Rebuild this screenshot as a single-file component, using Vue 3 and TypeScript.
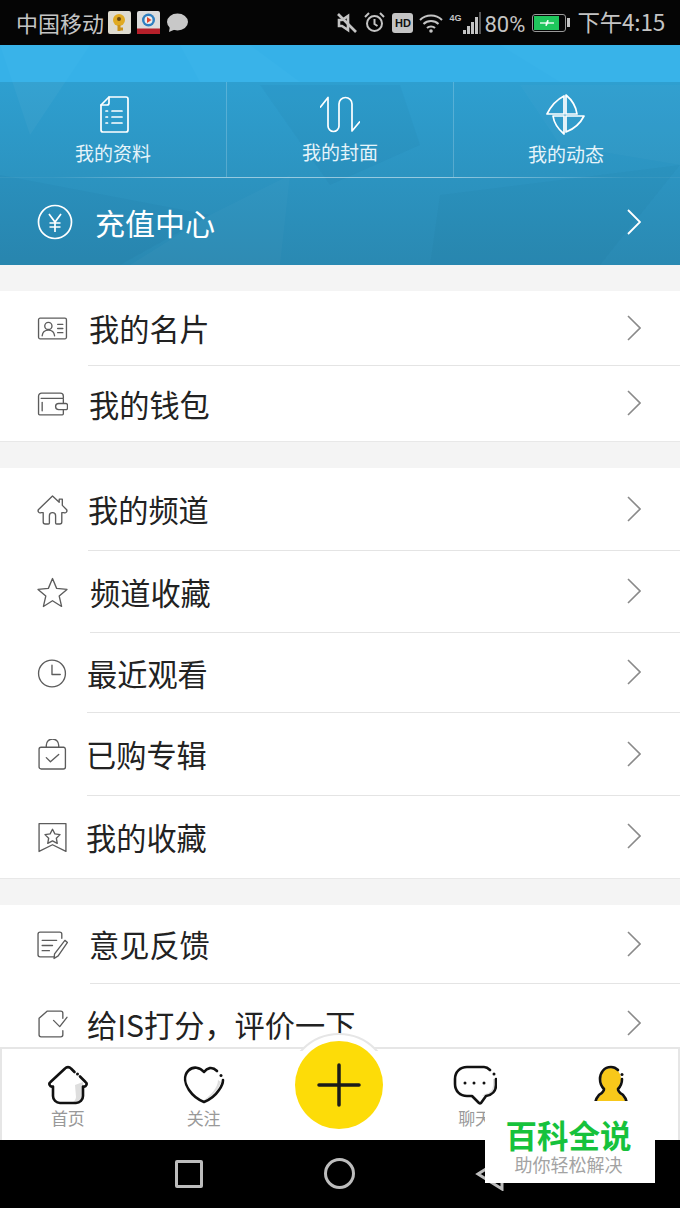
<template>
  <div class="phone">
    <!-- status bar -->
    <div class="status-bar">
      <div class="status-left">
        <span class="carrier">中国移动</span>
        <svg class="app-icon" viewBox="0 0 23 23">
          <rect width="23" height="23" rx="2" fill="#dedbd0" />
          <circle cx="11" cy="9" r="6" fill="#e0aa22" />
          <path d="M11 14v6M11 18h4" stroke="#c9921a" stroke-width="3" fill="none" />
          <circle cx="11" cy="8" r="2" fill="#6a4a12" />
        </svg>
        <svg class="app-icon second" viewBox="0 0 23 23">
          <rect width="23" height="23" rx="2" fill="#dcdcdc" />
          <circle cx="11.500" cy="9" r="6.500" fill="#2f7fc0" />
          <circle cx="11.500" cy="9" r="4" fill="#eee" />
          <path d="M10 6l4.500 3-4.500 3z" fill="#e2452c" />
          <rect y="17.500" width="23" height="5.500" fill="#b5202a" />
        </svg>
        <svg class="bubble" viewBox="0 0 22 20">
          <ellipse cx="11.500" cy="9" rx="10.500" ry="8.500" fill="#c8c8c8" />
          <path d="M4 13l-1 6 7-3z" fill="#c8c8c8" />
        </svg>
      </div>
      <div class="status-right">
        <svg class="st-mute" viewBox="0 0 20 20" fill="none" stroke="#c4c4c4" stroke-width="2.600">
          <path d="M2 7v6h3l6 4V3L5 7z" />
          <path d="M1 1l18 18" />
        </svg>
        <svg class="st-alarm" viewBox="0 0 21 21" fill="none" stroke="#c4c4c4" stroke-width="2">
          <circle cx="10.500" cy="11.500" r="7.500" />
          <path d="M10.500 7v5l3 2M1 5l4-4M20 5l-4-4" />
        </svg>
        <span class="st-hd">HD</span>
        <svg class="st-wifi" viewBox="0 0 24 20" fill="none" stroke="#c4c4c4" stroke-width="2">
          <path d="M1 7c6-6 16-6 22 0M4.500 11c4-4 11-4 15 0M8 15c2-2 6-2 8 0" />
          <circle cx="12" cy="18" r="1.800" fill="#c4c4c4" stroke="none" />
        </svg>
        <span class="st-4g">4G</span>
        <div class="st-signal">
          <i style="height: 4px"></i>
          <i style="height: 8px"></i>
          <i style="height: 12px"></i>
          <i style="height: 17px"></i>
          <i class="dim" style="height: 22px"></i>
        </div>
        <span class="st-pct">80%</span>
        <div class="st-battery">
          <div class="st-battery-fill">
            <svg viewBox="0 0 16 8" width="16" height="8"><path d="M1 4h6l2-3v3h6l-6 0-2 3V4z" fill="#fff" stroke="#fff" stroke-width=".8" /></svg>
          </div>
        </div>
        <span class="st-nub"></span>
        <span class="st-time">下午4:15</span>
      </div>
    </div>

    <main class="main">
      <!-- blue header -->
      <section class="hero">
        <svg class="hero-tex" viewBox="0 0 680 220" preserveAspectRatio="none">
          <polygon points="0,0 90,0 30,90" fill="#fff" opacity=".035" />
          <polygon points="180,0 250,0 300,37 200,37" fill="#fff" opacity=".035" />
          <polygon points="260,40 330,140 420,100 400,40" fill="#0a4d70" opacity=".05" />
          <polygon points="0,130 210,170 120,220 0,220" fill="#0a4d70" opacity=".05" />
          <polygon points="210,170 290,130 280,220 130,220" fill="#fff" opacity=".025" />
          <polygon points="440,150 680,120 600,220 430,220" fill="#0a4d70" opacity=".04" />
          <polygon points="500,0 680,0 680,37 560,37" fill="#fff" opacity=".03" />
          <polygon points="520,40 680,40 680,120 560,100" fill="#fff" opacity=".02" />
        </svg>
        <div class="hero-top"></div>
        <div class="shortcuts">
          <div v-for="s in shortcuts" :key="s.label" class="shortcut">
            <svg class="shortcut-icon" viewBox="0 0 40 42" fill="none" stroke="#fff" stroke-width="1.700" stroke-linejoin="round" stroke-linecap="round">
              <path v-for="d in s.paths" :key="d" :d="d" />
            </svg>
            <span :style="{ transform: `translateY(${s.shift}px)` }">{{ s.label }}</span>
          </div>
        </div>
        <div class="recharge">
          <svg class="yen" viewBox="0 0 36 36" fill="none" stroke="#fff" stroke-width="1.700">
            <circle cx="18" cy="18" r="16.500" />
            <path d="M12 10l6 8 6-8M18 18v10M12.500 19h11M12.500 23h11" />
          </svg>
          <span class="recharge-text">充值中心</span>
          <svg class="chev" viewBox="0 0 14 26" fill="none" stroke="#fff" stroke-width="1.800"><path d="M1 1l12 12L1 25" /></svg>
        </div>
      </section>

      <!-- menu groups -->
      <div v-for="(group, gi) in groups" :key="gi" class="group">
        <div
          v-for="(row, ri) in group"
          :key="row.label"
          class="row"
          :style="{ height: row.h + 'px' }"
        >
          <svg class="row-icon" viewBox="0 0 30 30" fill="none" stroke="#5c5c5c" stroke-width="1.300" stroke-linejoin="round" stroke-linecap="round">
            <path v-for="d in row.paths" :key="d" :d="d" />
          </svg>
          <div
            class="row-body"
            :class="{ lined: ri < group.length - 1 }"
            :style="{ left: row.line + 'px' }"
          >
            <span class="row-label" :style="{ marginLeft: row.x - row.line + 'px' }">{{ row.label }}</span>
          </div>
          <svg class="chev row-chev" viewBox="0 0 14 26" fill="none" stroke="#8a8a8a" stroke-width="1.600"><path d="M1 1l12 12L1 25" /></svg>
        </div>
      </div>
    </main>

    <!-- bottom tabs -->
    <nav class="tabs">
      <div v-for="(t, ti) in tabs" :key="ti" class="tab">
        <svg v-if="t.paths.length" class="tab-icon" viewBox="0 0 44 40">
          <path v-if="t.shade" :d="t.shade" :fill="t.shadeColor" stroke="none" />
          <path v-for="d in t.paths" :key="d" :d="d" fill="none" stroke="#111" stroke-width="2.600" stroke-linecap="round" stroke-linejoin="round" />
          <circle v-for="(c, i) in t.dots" :key="i" :cx="c[0]" :cy="c[1]" r="1.500" fill="#111" />
        </svg>
        <span v-if="t.label" class="tab-label">{{ t.label }}</span>
      </div>
    </nav>
    <div class="plus-halo"></div>
    <div class="plus-btn">
      <svg viewBox="0 0 44 44" width="44" height="44" stroke="#1a1a1a" stroke-width="3.500" stroke-linecap="round">
        <path d="M22 2v40M2 22h40" />
      </svg>
    </div>

    <!-- android nav -->
    <div class="navbar">
      <span class="nav-square"></span>
      <span class="nav-circle"></span>
      <svg class="nav-back" viewBox="0 0 30 34" fill="none" stroke="#bdbdbd" stroke-width="3"><path d="M27 2L3 17l24 15z" /></svg>
    </div>

    <!-- watermark -->
    <div class="watermark">
      <div class="wm-title">百科全说</div>
      <div class="wm-sub">助你轻松解决</div>
    </div>
  </div>
</template>

<script setup lang="ts">
interface Row {
  label: string
  h: number
  x: number
  line: number
  paths: string[]
}

interface Tab {
  label: string
  paths: string[]
  dots: number[][]
  shade?: string
  shadeColor?: string
}

const shortcuts = [
  {
    label: '我的资料',
    shift: 0,
    paths: [
      'M16 3H33a2 2 0 0 1 2 2V36a2 2 0 0 1-2 2H10a2 2 0 0 1-2-2V11z',
      'M16 3v6a2 2 0 0 1-2 2H8',
      'M19 17h10M19 23h10M19 29h10M13 17h1.500M13 23h1.500M13 29h1.500'
    ]
  },
  {
    label: '我的封面',
    shift: -1,
    paths: [
      'M0.500 13L8 3.500V32a5.500 5.500 0 0 0 11 0V10a6.500 6.500 0 0 1 13 0V37L39.500 28'
    ]
  },
  {
    label: '我的动态',
    shift: 1,
    paths: [
      'M1 20C5 12 10 6 18 2V20Z',
      'M20 1C26 6 30 12 31 20H20Z',
      'M38 22C34 30 28 35 20 38V22Z',
      'M18 40C12 35 8 29 7 22H18Z'
    ]
  }
]

const groups: Row[][] = [
  [
    {
      label: '我的名片',
      h: 75,
      x: 89,
      line: 88,
      paths: [
        'M3 5h24a1.500 1.500 0 0 1 1.500 1.500v17a1.500 1.500 0 0 1-1.500 1.500H3a1.500 1.500 0 0 1-1.500-1.500v-17A1.500 1.500 0 0 1 3 5z',
        'M11 9a3.500 3.500 0 1 1 0 7 3.500 3.500 0 0 1 0-7zM5 22c.5-4 3-5.500 6-5.500s5.500 1.500 6 5.500',
        'M20 11h5M20 15h5M20 19h5'
      ]
    },
    {
      label: '我的钱包',
      h: 75,
      x: 89,
      line: 88,
      paths: [
        'M1.500 8a3 3 0 0 1 3-3h18a3 3 0 0 1 3 3v2H4M1.500 8v17a1 1 0 0 0 1 1h22a1 1 0 0 0 1-1v-4',
        'M25.500 11v4M21 15h7a1.500 1.500 0 0 1 1.500 1.500v3a1.500 1.500 0 0 1-1.500 1.500h-7a3 3 0 0 1 0-6z',
        'M5 14v8'
      ]
    }
  ],
  [
    {
      label: '我的频道',
      h: 83,
      x: 88,
      line: 88,
      paths: [
        'M15 2L1.500 15a2 2 0 0 0 2.500 3H6v9a2 2 0 0 0 2 2h3a1 1 0 0 0 1-1v-7a3 3 0 0 1 6 0v7a1 1 0 0 0 1 1h3a2 2 0 0 0 2-2v-9h2a2 2 0 0 0 2.500-3l-4-4V5h-3v3z'
      ]
    },
    {
      label: '频道收藏',
      h: 82,
      x: 90,
      line: 90,
      paths: [
        'M15 1.500l4 9.500 10 1-7.500 6.500 2.300 10L15 23l-8.800 5.500 2.300-10L1 12l10-1z'
      ]
    },
    {
      label: '最近观看',
      h: 80,
      x: 87,
      line: 87,
      paths: [
        'M14.500 2a13 13 0 1 1 0 26 13 13 0 0 1 0-26z',
        'M14.500 7v9h8'
      ]
    },
    {
      label: '已购专辑',
      h: 83,
      x: 86,
      line: 87,
      paths: [
        'M4 8h22a2 2 0 0 1 1.500 2v17a2 2 0 0 1-2 2H4a2 2 0 0 1-2-2V10a2 2 0 0 1 2-2z',
        'M9 8V6a6 6 0 0 1 12 0v2',
        'M9 18l4 4 8-7'
      ]
    },
    {
      label: '我的收藏',
      h: 82,
      x: 86,
      line: 87,
      paths: [
        'M2 1.500h26v27l-13-6.500-13 6.500z',
        'M15 7l2.300 4.500 5 .7-3.600 3.500.9 5-4.600-2.400-4.600 2.400.9-5-3.600-3.500 5-.7z'
      ]
    }
  ],
  [
    {
      label: '意见反馈',
      h: 79,
      x: 89,
      line: 90,
      paths: [
        'M24 9V5a2 2 0 0 0-2-2H3a2 2 0 0 0-2 2v20a2 2 0 0 0 2 2h14',
        'M5 11h14M5 16h10M5 21h7',
        'M27 11l2.500 2-9 13-4 2.500.5-4.500z'
      ]
    },
    {
      label: '给IS打分，评价一下',
      h: 79,
      x: 87,
      line: 88,
      paths: [
        'M25 10V5a2 2 0 0 0-2-2H10L2 10v16a2 2 0 0 0 2 2h19a2 2 0 0 0 2-2v-4',
        'M16 12l6 6 7-9'
      ]
    }
  ]
]

const tabs: Tab[] = [
  {
    label: '首页',
    paths: ['M28.500 7L25 3.500a4 4 0 0 0-6 0L4.500 17a2.500 2.500 0 0 0 2 4.500H7V31a7 7 0 0 0 7 7H30a7 7 0 0 0 7-7V21.500h.5a2.500 2.500 0 0 0 2-4.500L34 11.500'],
    dots: [[31.500, 9]],
    shade: 'M29 20l8-3v14a7 7 0 0 1-7 7h-6a6 6 0 0 0 6-6z',
    shadeColor: '#dedede'
  },
  {
    label: '关注',
    paths: ['M35 6C30 1 25 3 22 7C18 2 11 1 6.500 5.500C1 11 3 19 7 25C11 31 17 35 22 37C27 35 33 31 37 25C40 21 41 18 41 15'],
    dots: [[39, 10.500]],
    shade: 'M36 15c0 8-8 16-14 20 6-1 15-11 17-18z',
    shadeColor: '#dedede'
  },
  { label: '', paths: [], dots: [] },
  {
    label: '聊天',
    paths: ['M37 5C35 3 33 2 31 2H14C7 2 2 7 2 14V19C2 26 7 31 14 31H19L26 38a1.500 1.500 0 0 0 2 0L33 31C39 30 43 26 43 20V14'],
    dots: [[12, 18], [21, 18], [31, 18], [41, 9]],
    shade: 'M40 14v6c0 5-3 8-8 9l-3 2 4-.5c6-1 10-5 10-10.500V14z',
    shadeColor: '#dedede'
  },
  {
    // label sits under the watermark in the screenshot
    label: '',
    paths: ['M29 5C27 3 25 2 22 2C15 2 11 8 11 14C11 18 13 22 15 24C15 27 13 28 10 30C8 32 7 34 6 38H38C37 34 36 32 34 30C31 28 29 27 29 24C31 22 33 18 33 14'],
    dots: [[33, 9.500]],
    shade: 'M22 3C16 3 12 8 12 14C12 18 14 22 16 24C16 27 14 28 11 31C9 33 8 35 7 38H37C36 35 35 33 33 31C30 28 28 27 28 24C30 22 32 18 32 14C32 8 28 3 22 3Z',
    shadeColor: '#f8c81a'
  }
]
</script>

<style scoped>
.phone {
  position: relative;
  width: 680px;
  height: 1208px;
  display: flex;
  flex-direction: column;
  overflow: hidden;
  background: #fff;
  font-family: "Noto Sans CJK SC", "Noto Sans", sans-serif;
}

.status-bar {
  height: 45px;
  flex: none;
  background: #050505;
  color: #c4c4c4;
  display: flex;
  align-items: center;
  justify-content: space-between;
  padding: 0 15px 0 16px;
}

.status-left,
.status-right {
  display: flex;
  align-items: center;
}

.carrier {
  font-size: 22px;
  width: 92px;
  margin-top: -2px;
}

.app-icon {
  width: 23px;
  height: 23px;
}

.app-icon.second {
  margin-left: 6px;
}

.bubble {
  width: 22px;
  height: 20px;
  margin-left: 6px;
}

.st-mute {
  width: 20px;
  height: 20px;
}

.st-alarm {
  width: 21px;
  height: 21px;
  margin-left: 7px;
}

.st-hd {
  width: 21px;
  height: 20px;
  margin-left: 7px;
  background: #c4c4c4;
  color: #111;
  border-radius: 3px;
  font: 700 11px/20px "Liberation Sans", sans-serif;
  text-align: center;
}

.st-wifi {
  width: 24px;
  height: 20px;
  margin-left: 6px;
}

.st-4g {
  width: 12px;
  margin: -10px 0 0 6px;
  font: 700 9px/10px "Liberation Sans", sans-serif;
}

.st-signal {
  height: 22px;
  display: flex;
  align-items: flex-end;
  gap: 1px;
  margin-left: 2px;
}

.st-signal i {
  display: block;
  width: 3px;
  background: #c4c4c4;
}

.st-signal i.dim {
  width: 2px;
  background: #555;
}

.st-pct {
  font-size: 22px;
  width: 41px;
  margin: 3px 0 0 3px;
  white-space: nowrap;
  font-family: "Roboto", sans-serif;
}

.st-battery {
  width: 34px;
  height: 18px;
  margin-left: 7px;
  border: 1px solid #999;
  border-radius: 3px;
  padding: 1px 6px 1px 1px;
  box-sizing: border-box;
}

.st-battery-fill {
  height: 100%;
  background: #1fc65c;
  display: flex;
  align-items: center;
  justify-content: center;
}

.st-nub {
  width: 3px;
  height: 9px;
  margin-left: 1px;
  background: #c4c4c4;
}

.st-time {
  font-size: 22.500px;
  margin: -3px 0 0 7px;
  letter-spacing: -0.2px;
  white-space: nowrap;
}

.main {
  flex: 1;
  min-height: 0;
  overflow: hidden;
  background: #f4f4f4;
}

.hero {
  position: relative;
  height: 220px;
  display: flex;
  flex-direction: column;
  background: linear-gradient(#2e9fd0 17%, #2a89b2 100%);
  color: #fff;
  margin-bottom: 26px;
}

.hero-tex {
  position: absolute;
  inset: 0;
  width: 100%;
  height: 100%;
}

.hero-top {
  position: relative;
  height: 37px;
  flex: none;
  background: rgba(60, 190, 248, 0.6);
}

.shortcuts {
  position: relative;
  height: 96px;
  flex: none;
  display: grid;
  grid-template-columns: 226px 227px 225px;
  border-bottom: 1px solid;
  border-image: linear-gradient(90deg, rgba(255, 255, 255, 0.05) 8%, rgba(255, 255, 255, 0.5) 30%, rgba(255, 255, 255, 0.5) 65%, rgba(255, 255, 255, 0.05) 92%) 1;
  box-sizing: border-box;
}

.shortcut {
  display: flex;
  flex-direction: column;
  align-items: center;
  padding-top: 12px;
  font-size: 19px;
  line-height: 26px;
  color: #e6f4fa;
  box-sizing: border-box;
}

.shortcut + .shortcut {
  border-left: 1px solid rgba(255, 255, 255, 0.2);
}

.shortcut-icon {
  width: 40px;
  height: 42px;
  margin-bottom: 4px;
}

.recharge {
  position: relative;
  flex: 1;
  display: flex;
  align-items: center;
  padding: 0 39px 0 37px;
}

.yen {
  width: 36px;
  height: 36px;
}

.recharge-text {
  font-size: 30px;
  margin-left: 22px;
  flex: 1;
}

.chev {
  width: 14px;
  height: 26px;
  flex: none;
}

.group {
  background: #fff;
  border-bottom: 1px solid #e8e8e8;
  margin-bottom: 26px;
}

.row {
  position: relative;
  display: flex;
  align-items: center;
  padding-left: 37px;
  box-sizing: border-box;
}

.row-icon {
  width: 31px;
  height: 31px;
  flex: none;
}

.row-body {
  position: absolute;
  top: 0;
  right: 0;
  bottom: 0;
  display: flex;
  align-items: center;
  box-sizing: border-box;
}

.row-body.lined {
  border-bottom: 1px solid #e4e4e4;
}

.row-label {
  font-size: 30.200px;
  color: #222;
  white-space: nowrap;
}

.row-chev {
  position: absolute;
  right: 39px;
  top: 50%;
  margin-top: -14px;
}

.tabs {
  position: relative;
  height: 93px;
  flex: none;
  display: grid;
  grid-template-columns: repeat(5, 135.750px);
  background: #fff;
  box-shadow: inset 0 2px #e6e6e6, inset 2px 0 #e6e6e6, inset -2px 0 #e6e6e6;
}

.tab {
  display: flex;
  flex-direction: column;
  align-items: center;
  padding-top: 18px;
}

.tab-icon {
  width: 44px;
  height: 40px;
}

.tab-label {
  font-size: 17px;
  line-height: 24px;
  color: #999;
  margin-top: 1px;
}

.plus-halo {
  position: absolute;
  left: 287px;
  top: 1033px;
  width: 104px;
  height: 104px;
  border-radius: 50%;
  background: #fff;
  box-sizing: border-box;
  border: 2px solid #e6e6e6;
  clip-path: inset(0 0 86px 0);
}

.plus-btn {
  position: absolute;
  left: 295px;
  top: 1041px;
  width: 88px;
  height: 88px;
  border-radius: 50%;
  background: #fddc08;
  display: flex;
  align-items: center;
  justify-content: center;
}

.navbar {
  height: 68px;
  flex: none;
  background: #000;
  position: relative;
}

.nav-square {
  position: absolute;
  left: 175px;
  top: 20px;
  width: 28px;
  height: 28px;
  box-sizing: border-box;
  border: 3px solid #bdbdbd;
  border-radius: 2px;
}

.nav-circle {
  position: absolute;
  left: 324px;
  top: 18px;
  width: 31px;
  height: 31px;
  box-sizing: border-box;
  border: 3px solid #bdbdbd;
  border-radius: 50%;
}

.nav-back {
  position: absolute;
  left: 475px;
  top: 17px;
  width: 30px;
  height: 34px;
}

.watermark {
  position: absolute;
  left: 485px;
  top: 1101px;
  width: 170px;
  height: 82px;
  padding: 17px 3px 0 0;
  box-sizing: border-box;
  background: #fff;
  text-align: center;
}

.wm-title {
  font-size: 31.500px;
  line-height: 32px;
  font-weight: 700;
  color: #16c23c;
}

.wm-sub {
  font-size: 18px;
  line-height: 24px;
  margin-top: 2px;
  color: #a3a3a3;
}
</style>

<style>
body {
  margin: 0;
  background: #fff;
}
</style>
